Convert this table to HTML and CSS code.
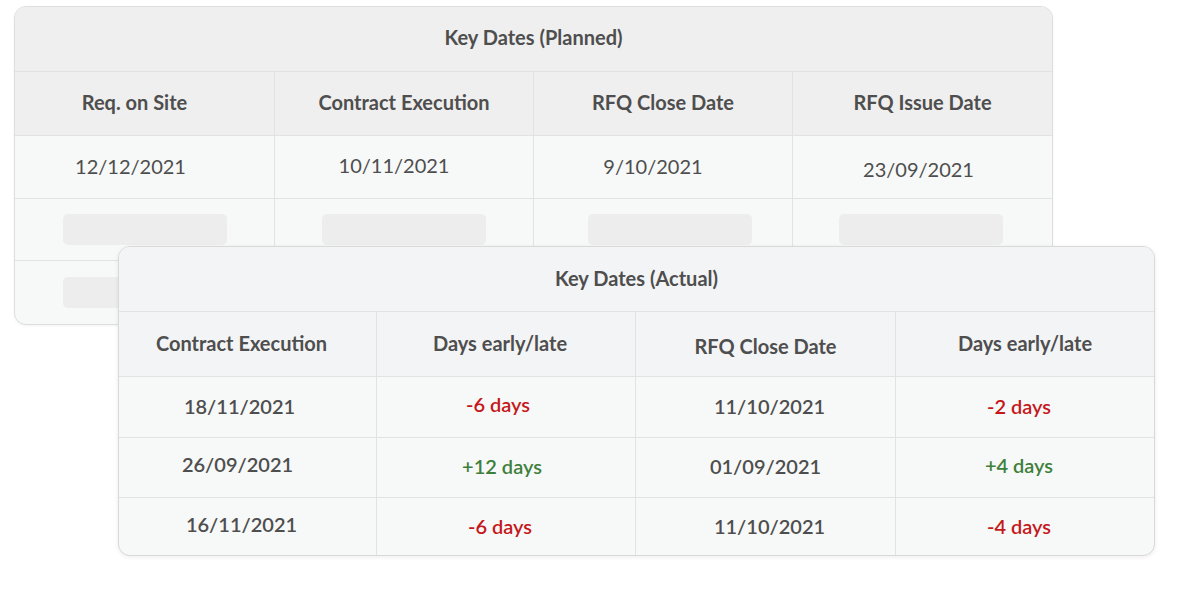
FILE: index.html
```html
<!DOCTYPE html>
<html>
<head>
<meta charset="utf-8">
<link rel="stylesheet" href="styles.css">
</head>
<body>
<div class="stage">
  <div class="card planned">
    <div class="title">Key Dates (Planned)</div>
    <div class="grid head">
      <div class="cell n-l10">Req. on Site</div>
      <div class="cell">Contract Execution</div>
      <div class="cell">RFQ Close Date</div>
      <div class="cell">RFQ Issue Date</div>
    </div>
    <div class="grid row r1">
      <div class="cell n-l14">12/12/2021</div>
      <div class="cell n-l10 n-u1">10/11/2021</div>
      <div class="cell n-l10">9/10/2021</div>
      <div class="cell n-l4 n-d3">23/09/2021</div>
    </div>
    <div class="grid row r2">
      <div class="cell"><span class="skel"></span></div>
      <div class="cell"><span class="skel"></span></div>
      <div class="cell"><span class="skel skel-r"></span></div>
      <div class="cell"><span class="skel skel-l"></span></div>
    </div>
    <div class="grid row r3">
      <div class="cell"><span class="skel"></span></div>
      <div class="cell"><span class="skel"></span></div>
      <div class="cell"><span class="skel skel-r"></span></div>
      <div class="cell"><span class="skel skel-l"></span></div>
    </div>
  </div>

  <div class="card actual">
    <div class="title">Key Dates (Actual)</div>
    <div class="grid head">
      <div class="cell n-l6">Contract Execution</div>
      <div class="cell n-l6">Days early/late</div>
      <div class="cell n-d3">RFQ Close Date</div>
      <div class="cell">Days early/late</div>
    </div>
    <div class="grid row a1">
      <div class="cell n-l8">18/11/2021</div>
      <div class="cell late n-l8 n-u2">-6 days</div>
      <div class="cell n-r4">11/10/2021</div>
      <div class="cell late n-l6">-2 days</div>
    </div>
    <div class="grid row a2">
      <div class="cell n-l10 n-u2">26/09/2021</div>
      <div class="cell early n-l4">+12 days</div>
      <div class="cell">01/09/2021</div>
      <div class="cell early n-l6 n-u1">+4 days</div>
    </div>
    <div class="grid row a3">
      <div class="cell n-l6 n-u2">16/11/2021</div>
      <div class="cell late n-l6">-6 days</div>
      <div class="cell n-r4">11/10/2021</div>
      <div class="cell late n-l6">-4 days</div>
    </div>
  </div>
</div>
</body>
</html>
```

FILE: styles.css
```css
* { box-sizing: border-box; }
html, body { margin: 0; padding: 0; background: #ffffff; }
body {
  font-family: Lato, "Open Sans", sans-serif;
  color: #4e4e4e;
  width: 1200px;
  height: 592px;
  overflow: hidden;
}
.stage {
  position: relative;
  width: 1200px;
  height: 592px;
  padding: 6px 0 0 14px;
}
.card {
  border: 1px solid #dedede;
  border-radius: 12px;
  overflow: hidden;
  box-shadow: 0 1px 3px rgba(0, 0, 0, 0.05);
  display: flex;
  flex-direction: column;
}
.planned {
  width: 1039px;
  height: 319px;
  background: #f7f8f8;
}
.actual {
  position: absolute;
  left: 118px;
  top: 246px;
  width: 1037px;
  height: 310px;
  background: #f7f8f8;
  border-color: #d9d9d9;
  box-shadow: 0 1px 4px rgba(0, 0, 0, 0.08);
}
.title {
  display: flex;
  align-items: center;
  justify-content: center;
  height: 65px;
  padding-bottom: 4px;
  font-weight: 700;
  font-size: 20px;
  border-bottom: 1px solid #e2e2e2;
}
.planned .title { background: #efefef; }
.actual .title { background: #f3f4f5; padding-bottom: 2px; }
.grid {
  display: grid;
  grid-template-columns: 260px 259px 259px 1fr;
  border-bottom: 1px solid #e2e2e2;
}
.grid:last-child { border-bottom: none; flex: 1; }
.cell {
  display: flex;
  align-items: center;
  justify-content: center;
  border-right: 1px solid #e2e2e2;
  font-size: 20px;
  padding-bottom: 3px;
}
.cell:last-child { border-right: none; }
.head .cell { font-weight: 700; font-size: 20px; }
.planned .head { background: #efefef; height: 64px; }
.planned .r1 { height: 63px; }
.planned .r2 { height: 62px; }
.actual .grid { grid-template-columns: 258px 259px 260px 1fr; }
.actual .head { background: #f3f4f5; height: 65px; }
.actual .a1 { height: 61px; }
.actual .a2 { height: 60px; }
.actual .row .cell { font-weight: 600; }
.actual .a3 .cell { padding-bottom: 2px; }

/* small optical offsets that mirror the source layout */
.n-l4 { padding-right: 8px; }
.n-l6 { padding-right: 12px; }
.n-l8 { padding-right: 16px; }
.n-l10 { padding-right: 20px; }
.n-l14 { padding-right: 28px; }
.n-r4 { padding-left: 8px; }
.planned .n-u1, .actual .n-u1 { padding-bottom: 5px; }
.planned .n-u2, .actual .n-u2 { padding-bottom: 7px; }
.actual .a3 .n-u2 { padding-bottom: 5px; }
.planned .n-d3, .actual .n-d3 { padding-bottom: 0; padding-top: 3px; }

.skel {
  display: block;
  width: 164px;
  height: 31px;
  margin-top: 3px;
  border-radius: 5px;
  background: #ededed;
}
.skel-r { margin-left: 14px; }
.skel-l { margin-right: 4px; }
.late { color: #c4181b; }
.early { color: #3f7f3c; }
```
